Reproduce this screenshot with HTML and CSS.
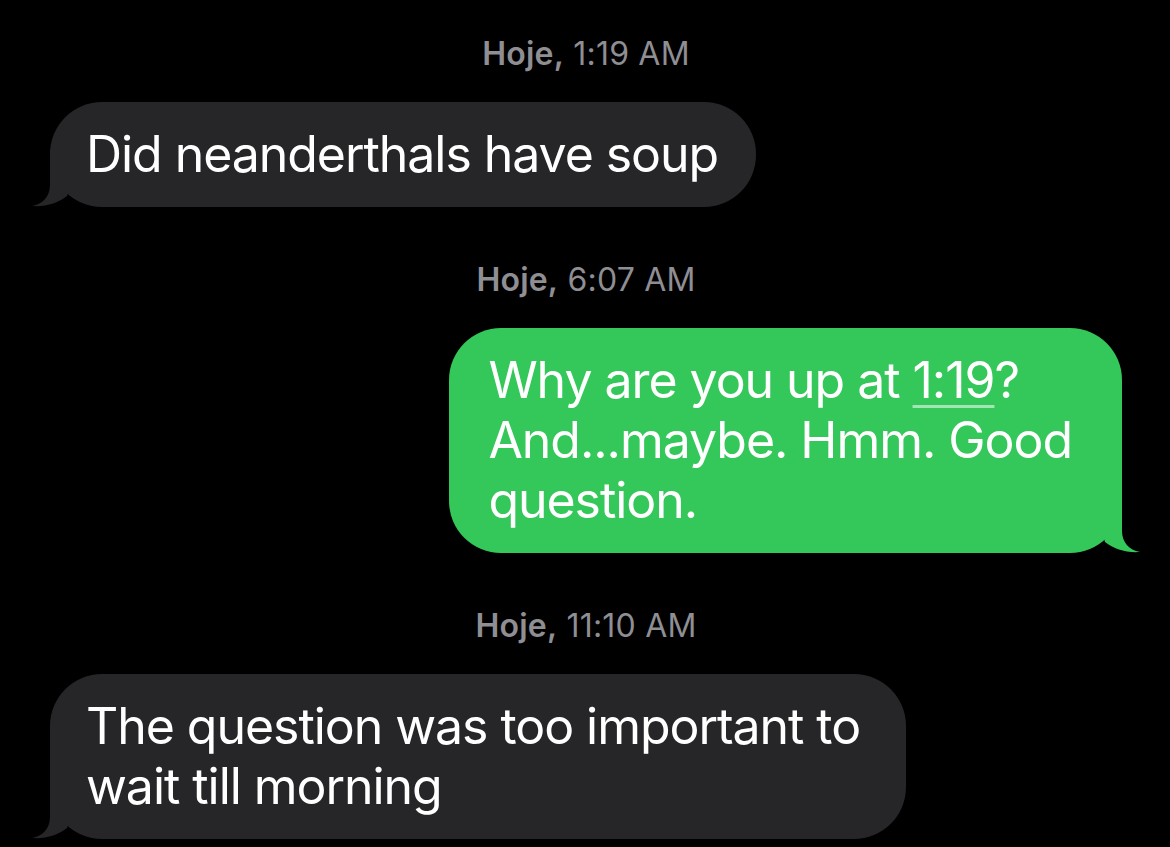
FILE: index.html
```html
<!DOCTYPE html>
<html lang="pt">
<head>
<meta charset="utf-8">
<title>Messages</title>
<link rel="stylesheet" href="styles.css">
</head>
<body>
<main class="chat">
  <section class="group">
    <div class="stamp"><b>Hoje,</b> 1:19 AM</div>
    <div class="bubble in">
      <svg class="tail" viewBox="0 0 60 60" width="60" height="60" aria-hidden="true"><path d="M20 3 L20 38 C20 49 13 57 2 59 C16 60 28 56 37 49 L45 23 L30 3 Z"/></svg>
      <span class="text">Did neanderthals have soup</span>
    </div>
  </section>
  <section class="group">
    <div class="stamp"><b>Hoje,</b> 6:07 AM</div>
    <div class="bubble out">
      <svg class="tail" viewBox="0 0 60 60" width="60" height="60" aria-hidden="true"><path d="M20 3 L20 38 C20 49 13 57 2 59 C16 60 28 56 37 49 L45 23 L30 3 Z"/></svg>
      <span class="text">Why are you up at <span class="link">1:19</span>?<br>And...maybe. Hmm. Good<br>question.</span>
    </div>
  </section>
  <section class="group">
    <div class="stamp"><b>Hoje,</b> 11:10 AM</div>
    <div class="bubble in wide">
      <svg class="tail" viewBox="0 0 60 60" width="60" height="60" aria-hidden="true"><path d="M20 3 L20 38 C20 49 13 57 2 59 C16 60 28 56 37 49 L45 23 L30 3 Z"/></svg>
      <span class="text">The question was too important to<br>wait till morning</span>
    </div>
  </section>
</main>
</body>
</html>
```

FILE: styles.css
```css
html, body {
  margin: 0;
  padding: 0;
  background: #000;
}

body {
  width: 1170px;
  height: 847px;
  overflow: hidden;
  font-family: Inter, "Noto Sans", "Liberation Sans", sans-serif;
  -webkit-font-smoothing: antialiased;
}

.chat {
  display: flex;
  flex-direction: column;
  gap: 53px;
  padding: 34px 48px 0 50px;
}

.group {
  display: flex;
  flex-direction: column;
  gap: 28px;
}

.stamp {
  align-self: center;
  color: #8e8e93;
  font-size: 32px;
  line-height: 40px;
  letter-spacing: 0.2px;
}

.stamp b {
  font-weight: 600;
}

.bubble {
  position: relative;
  border-radius: 52px;
  padding: 22px 38px 23px 36px;
  font-size: 50px;
  line-height: 60px;
  color: #fff;
  letter-spacing: -1.05px;
}

.bubble .text {
  position: relative;
}

.bubble.in {
  align-self: flex-start;
  background: #262629;
}

.bubble.in.wide {
  padding-right: 46px;
}

.bubble.in .tail {
  position: absolute;
  left: -20px;
  bottom: 0;
  fill: #262629;
}

.bubble.out {
  align-self: flex-end;
  background: #34c759;
  padding: 22px 50px 23px 39px;
}

.bubble.out .tail {
  position: absolute;
  right: -20px;
  bottom: 0;
  fill: #34c759;
  transform: scaleX(-1);
}

.link {
  text-decoration: underline;
  text-decoration-color: rgba(255, 255, 255, 0.55);
  text-decoration-thickness: 3px;
  text-underline-offset: 7px;
}
```
